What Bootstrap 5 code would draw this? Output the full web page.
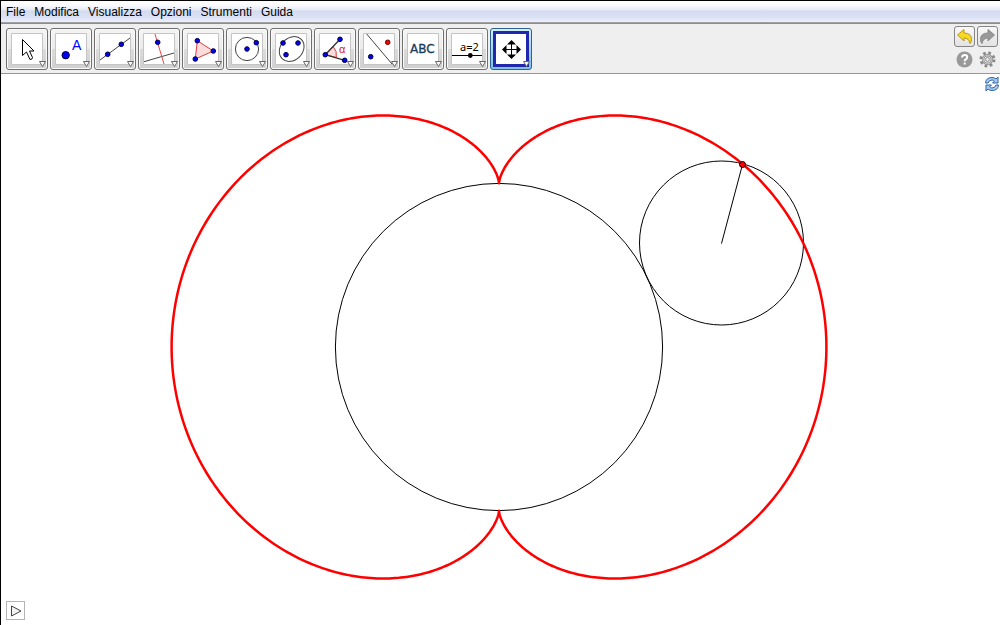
<!DOCTYPE html>
<html lang="it">
<head>
<meta charset="utf-8">
<meta name="viewport" content="width=device-width, initial-scale=1">
<title>GeoGebra</title>
<link href="https://cdn.jsdelivr.net/npm/bootstrap@5.3.0/dist/css/bootstrap.min.css" rel="stylesheet">
<style>
body{font-family:"Liberation Sans",sans-serif;font-size:12px;line-height:16px;color:#000;background:#fff;border-top:1px solid #000;border-left:1px solid #000}
.menubar{height:22px;padding-left:1px;background:linear-gradient(#fff 0,#fafbfe 20%,#e6eaf6 42%,#d5dbef 48%,#dbe1f5 75%,#e9effd 100%);border-bottom:1px solid #a0a0a0}
.menubar button{border:0;background:none;padding:0 4px;margin-right:1px;color:#000}
.toolbar-row{background:#efefef;border-top:1px solid #8c8c8c;border-bottom:1px solid #989898;padding:4px 2px 3px 5px}
.tool{width:42px;height:42px;padding:0;border:1px solid #707070;border-radius:3px;background:linear-gradient(#f4f4f4,#ebebeb 49%,#dcdcdc 50%,#cfcfcf);box-shadow:inset 0 0 0 1px #fafafa}
.tool svg,.act svg{display:block}
.tool.active{border-color:#2c628b;background:linear-gradient(#d5edfa,#a5d8f0 50%,#7dc2e4);box-shadow:none}
.acts{display:grid;grid-template-columns:21px 21px;column-gap:2px;row-gap:2px;margin-top:-2px}
.act{height:21px;padding:0;border:1px solid #858585;border-radius:3px;background:linear-gradient(#f8f8f8,#e2e2e2)}
.act.plain{border-color:transparent;background:none}
.board{min-height:0}
.refresh{right:0;top:2px;border:0;padding:0;background:none}
.play{left:5px;bottom:5px;width:19px;height:19px;padding:0;border:1px solid #b4b4b4;background:#fff}
.refresh svg,.play svg,.board>svg{display:block}
.p{fill:#00f;stroke:#000040;stroke-width:1}
.fr{fill:#fff;stroke:#c4c4c4}
.ln{fill:none;stroke:#444;stroke-width:1}
.tri{fill:#fff;stroke:#666;stroke-width:1}
.thin{fill:none;stroke:#000;stroke-width:1}
</style>
</head>
<body class="d-flex flex-column vh-100 overflow-hidden">
<nav class="menubar d-flex align-items-center flex-shrink-0" aria-label="Menu">
<button type="button">File</button><button type="button">Modifica</button><button type="button">Visualizza</button><button type="button">Opzioni</button><button type="button">Strumenti</button><button type="button">Guida</button>
</nav>
<header class="toolbar-row d-flex justify-content-between flex-shrink-0">
<div class="d-flex" style="gap:2px">
<button class="tool" type="button" aria-label="Muovi"><svg width="40" height="40" viewBox="1 1 40 40"><path class="fr" d="M5.500 5.500h31v31h-31z"/><path d="M16.500 11.500v16l4-3.500 3.500 7.500q2.500 0 2.500-2l-3-6.500h4.500z" fill="#fff" stroke="#000"/><path class="tri" d="M33.500 33.500h6l-3 5z"/></svg></button>
<button class="tool" type="button" aria-label="Punto"><svg width="40" height="40" viewBox="1 1 40 40"><path class="fr" d="M5.500 5.500h31v31h-31z"/><circle class="p" cx="15.700" cy="27.200" r="3.700"/><text x="22" y="22" font-size="14" fill="#00f">A</text><path class="tri" d="M33.500 33.500h6l-3 5z"/></svg></button>
<button class="tool" type="button" aria-label="Retta"><svg width="40" height="40" viewBox="1 1 40 40"><path class="fr" d="M5.500 5.500h31v31h-31z"/><path class="ln" d="M6 32 36 10"/><circle class="p" cx="13.700" cy="26.300" r="2.300"/><circle class="p" cx="27.300" cy="16.300" r="2.300"/><path class="tri" d="M33.500 33.500h6l-3 5z"/></svg></button>
<button class="tool" type="button" aria-label="Perpendicolare"><svg width="40" height="40" viewBox="1 1 40 40"><path class="fr" d="M5.500 5.500h31v31h-31z"/><path class="ln" d="M6 33.700 36 25"/><path d="M17 6 26 36" stroke="#ee4444"/><circle class="p" cx="19.700" cy="14.300" r="2.300"/><path class="tri" d="M33.500 33.500h6l-3 5z"/></svg></button>
<button class="tool" type="button" aria-label="Poligono"><svg width="40" height="40" viewBox="1 1 40 40"><path class="fr" d="M5.500 5.500h31v31h-31z"/><path d="M15.300 12.700 31.300 23 13.300 31z" fill="#fbdcdc" stroke="#e03c3c"/><circle class="p" cx="15.300" cy="12.700" r="2.300"/><circle class="p" cx="31.300" cy="23" r="2.300"/><circle class="p" cx="13.300" cy="31" r="2.300"/><path class="tri" d="M33.500 33.500h6l-3 5z"/></svg></button>
<button class="tool" type="button" aria-label="Circonferenza"><svg width="40" height="40" viewBox="1 1 40 40"><path class="fr" d="M5.500 5.500h31v31h-31z"/><circle class="ln" cx="21" cy="21" r="11.600"/><circle class="p" cx="21" cy="21" r="2.300"/><circle class="p" cx="30.300" cy="14.700" r="2.300"/><path class="tri" d="M33.500 33.500h6l-3 5z"/></svg></button>
<button class="tool" type="button" aria-label="Conica"><svg width="40" height="40" viewBox="1 1 40 40"><path class="fr" d="M5.500 5.500h31v31h-31z"/><ellipse class="ln" cx="21.700" cy="21" rx="13.600" ry="11" transform="rotate(-45 21.700 21)"/><circle class="p" cx="13" cy="15" r="2.300"/><circle class="p" cx="28" cy="15" r="2.300"/><circle class="p" cx="16" cy="26.700" r="2.300"/><path class="tri" d="M33.500 33.500h6l-3 5z"/></svg></button>
<button class="tool" type="button" aria-label="Angolo"><svg width="40" height="40" viewBox="1 1 40 40"><path class="fr" d="M5.500 5.500h31v31h-31z"/><path d="M11.300 26.700 19 18.500Q23.500 23 22.300 29.500z" fill="#fbdcdc" stroke="#e03c3c"/><path d="M26 11.300 11.300 26.700 30.700 32.300" fill="none" stroke="#333" stroke-width="1.300"/><text x="25" y="25" font-size="11" fill="#e02020">α</text><circle class="p" cx="11.300" cy="26.700" r="2.300"/><circle class="p" cx="26" cy="11.300" r="2.300"/><circle class="p" cx="30.700" cy="32.300" r="2.300"/><path class="tri" d="M33.500 33.500h6l-3 5z"/></svg></button>
<button class="tool" type="button" aria-label="Simmetria"><svg width="40" height="40" viewBox="1 1 40 40"><path class="fr" d="M5.500 5.500h31v31h-31z"/><path class="ln" d="M8.700 6 34 36"/><circle class="p" cx="12.700" cy="28.700" r="2.300"/><circle cx="29.700" cy="14.300" r="2.300" fill="red" stroke="#600"/><path class="tri" d="M33.500 33.500h6l-3 5z"/></svg></button>
<button class="tool" type="button" aria-label="Testo"><svg width="40" height="40" viewBox="1 1 40 40"><path class="fr" d="M5.500 5.500h31v31h-31z"/><text x="8" y="25" font-family="DejaVu Sans,sans-serif" font-size="12" fill="#173a5c" stroke="#173a5c" stroke-width=".3">ABC</text><path class="tri" d="M33.500 33.500h6l-3 5z"/></svg></button>
<button class="tool" type="button" aria-label="Slider"><svg width="40" height="40" viewBox="1 1 40 40"><path class="fr" d="M5.500 5.500h31v31h-31z"/><text x="14" y="23" font-family="Noto Sans,sans-serif" font-size="11">a=2</text><path d="M6 27.500h30" stroke="#000"/><circle cx="24.300" cy="27.500" r="2.400"/><path class="tri" d="M33.500 33.500h6l-3 5z"/></svg></button>
<button class="tool active" type="button" aria-label="Muovi la vista"><svg width="40" height="40" viewBox="1 1 40 40"><path d="M4.500 4.500h33v33h-33z" fill="#fff" stroke="#2128ad" stroke-width="3"/><path d="M21.500 15v13M15 21.500h13" stroke="#000"/><path d="m21.500 12 4.500 4.500h-9zM21.500 31l4.500-4.500h-9zM12 21.500l4.500-4.500v9zM31 21.500 26.500 17v9z"/><path class="tri" d="M33.500 33.500h6l-3 5z"/></svg></button>
</div>
<div class="acts">
<button class="act" type="button" aria-label="Annulla"><svg width="19" height="19" viewBox="0 0 19 19"><path d="M2.500 8 9 2.500V6q7.500 0 7.500 6.500 0 2.500-1.500 4-1-5.500-6-5.500v3z" fill="#f8d820" stroke="#b99715"/></svg></button>
<button class="act" type="button" aria-label="Ripeti"><svg width="19" height="19" viewBox="0 0 19 19"><path d="M16.500 8 10 2.500V6Q2.500 6 2.500 12.500q0 2.500 1.500 4 1-5.500 6-5.500v3z" fill="#999" stroke="#8a8a8a"/></svg></button>
<button class="act plain" type="button" aria-label="Aiuto"><svg width="19" height="19" viewBox="0 0 19 19"><circle cx="9.500" cy="9.500" r="8" fill="#999"/><path d="M7 7.500q0-2.500 2.700-2.500 2.500 0 2.500 2.200 0 1.300-1.500 2.200-1 .6-1 1.800M9.700 12.500v2" fill="none" stroke="#fff" stroke-width="2"/></svg></button>
<button class="act plain" type="button" aria-label="Impostazioni"><svg width="19" height="19" viewBox="0 0 19 19"><circle cx="9.500" cy="9.500" r="6.500" fill="none" stroke="#888" stroke-width="3" stroke-dasharray="2.600 2.505"/><circle cx="9.500" cy="9.500" r="4.400" fill="#eee" stroke="#929292" stroke-width="2.600"/><circle cx="9.500" cy="9.500" r="4.400" fill="none" stroke="#ccc"/><circle cx="9.500" cy="9.500" r="1.900" fill="#f4f4f4" stroke="#888"/></svg></button>
</div>
</header>
<main class="board position-relative flex-grow-1">
<svg class="w-100 h-100" viewBox="1 74 999 551" role="img" aria-label="Nefroide">
<circle class="thin" cx="499" cy="347" r="163.600"/>
<circle class="thin" cx="721.500" cy="243" r="82"/>
<path class="thin" d="M721.500 243.500 742.500 164.500"/>
<path id="curve" fill="none" stroke="#f00" stroke-width="2.500" stroke-linejoin="round"/>
<circle cx="742.500" cy="164.500" r="3" fill="#f00" stroke="#000"/>
</svg>
<button class="refresh position-absolute" type="button" aria-label="Aggiorna"><svg width="16" height="16" viewBox="0 0 16 16"><g fill="#a9cdf0" stroke="#2f62a6"><path id="arr" d="M1.500 7Q2 1.500 8 1.500q2.500 0 4 1.500l2-2v6H8.500l2-2Q9.500 4 8 4 5 4 4 7z"/><path d="M14.500 9Q14 14.500 8 14.500q-2.500 0-4-1.500l-2 2V9h5.500l-2 2q1 1 2.500 1 3 0 4-3z"/></g></svg></button>
<button class="play position-absolute" type="button" aria-label="Riproduci"><svg width="17" height="17" viewBox="0 0 17 17"><path d="M4.500 4v10L14 9z" fill="#f2f2f2" stroke="#444"/></svg></button>
</main>
<script>
// Nephroid: a circle of radius r rolling around one of radius 2r
const r = 81.85, pts = [];
for (let i = 0; i < 720; i++) {
  const t = i * Math.PI / 360;
  pts.push((499 + r * (3 * Math.cos(t) + Math.cos(3 * t))).toFixed(2) + ' ' + (347 + r * (3 * Math.sin(t) + Math.sin(3 * t))).toFixed(2));
}
document.getElementById('curve').setAttribute('d', 'M' + pts.join('L') + 'Z');
</script>
<script src="https://cdn.jsdelivr.net/npm/bootstrap@5.3.0/dist/js/bootstrap.bundle.min.js"></script>
</body>
</html>
